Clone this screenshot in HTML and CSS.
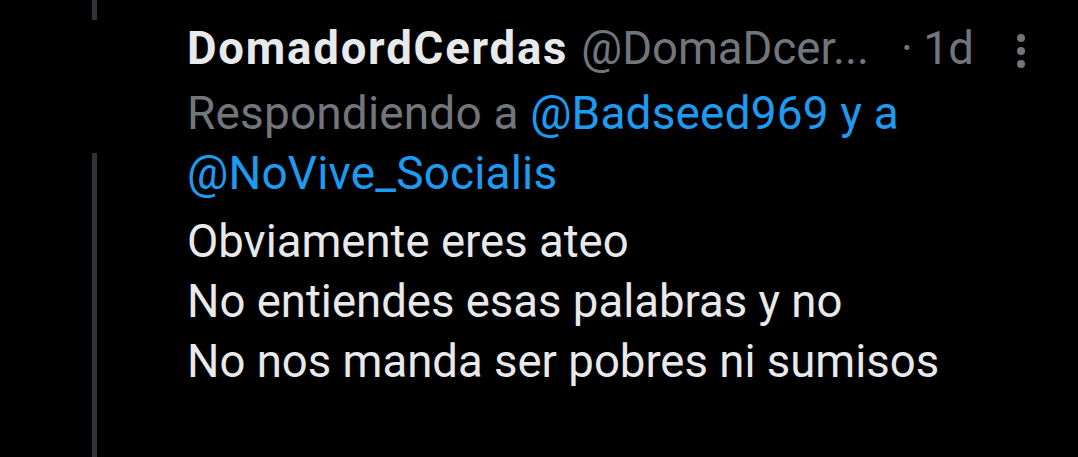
FILE: index.html
```html
<!DOCTYPE html>
<html lang="es">
<head>
    <meta charset="UTF-8">
    <meta name="viewport" content="width=device-width, initial-scale=1.0">
    <title>Respuesta</title>
    <link rel="stylesheet" href="styles.css">
</head>
<body>
    <article class="reply">
        <div class="rail">
            <div class="rail-top"></div>
            <div class="rail-bottom"></div>
        </div>
        <div class="content">
            <div class="reply-head">
                <span class="name">DomadordCerdas</span>
                <span class="handle">@DomaDcer...</span>
                <span class="time">· 1d</span>
                <span class="menu">
                    <svg width="10" height="34" viewBox="0 0 10 34">
                        <circle cx="5" cy="4" r="4"/>
                        <circle cx="5" cy="17" r="4"/>
                        <circle cx="5" cy="30" r="4"/>
                    </svg>
                </span>
            </div>
            <p class="replying">Respondiendo a <a class="mention">@Badseed969 y a</a><br><a class="mention">@NoVive_Socialis</a></p>
            <p class="text">Obviamente eres ateo<br>No entiendes esas palabras y no<br>No nos manda ser pobres ni sumisos</p>
        </div>
    </article>
</body>
</html>
```

FILE: styles.css
```css
body {
    margin: 0;
    padding: 0;
    background-color: #000;
    color: #e7e9ea;
    font-family: Roboto, 'Noto Sans', sans-serif;
}
.reply {
    display: flex;
    height: 457px;
}
.rail {
    width: 187px;
    display: flex;
    flex-direction: column;
    padding-left: 92px;
    box-sizing: border-box;
}
.rail-top {
    width: 5px;
    height: 20px;
    background-color: #2f3336;
}
.rail-bottom {
    width: 5px;
    flex: 1;
    margin-top: 133px;
    background-color: #2f3336;
}
.content {
    flex: 1;
    padding-top: 18px;
    padding-right: 52px;
}
.reply-head {
    display: flex;
    align-items: center;
    height: 60px;
    font-size: 45.5px;
}
.name {
    font-weight: 700;
    color: #e7e9ea;
    letter-spacing: 1.8px;
}
.handle {
    color: #71767b;
    margin-left: 13px;
}
.time {
    color: #71767b;
    margin-left: 32px;
    letter-spacing: -0.5px;
}
.menu {
    margin-left: auto;
    display: flex;
    fill: #71767b;
    padding-top: 6px;
}
.replying {
    margin: 5px 0 0;
    font-size: 46px;
    line-height: 60px;
    color: #71767b;
    letter-spacing: 0.15px;
}
.mention {
    color: #1d9bf0;
}
.text {
    margin: 9px 0 0;
    font-size: 45.5px;
    line-height: 60px;
    color: #e7e9ea;
}
```
